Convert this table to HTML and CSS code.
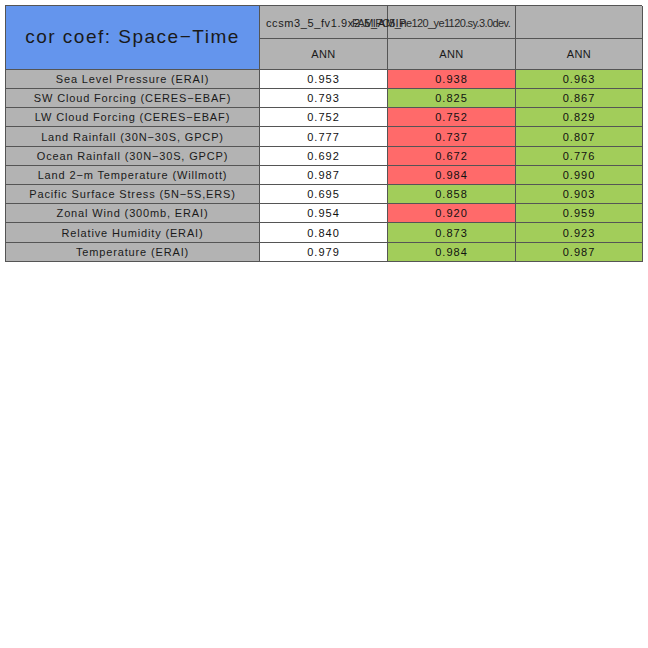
FILE: index.html
```html
<!DOCTYPE html>
<html>
<head>
<meta charset="utf-8">
<link rel="stylesheet" href="styles.css">
</head>
<body>
<div class="table">
  <div class="title">cor coef: Space−Time</div>
  <div class="hcell h1"><span class="case1">ccsm3_5_fv1.9x2.5_AMIP</span></div>
  <div class="hcell h1"><span class="case2">FAMIPC5_ne120_ye1120.sy.3.0dev.</span></div>
  <div class="hcell h1"></div>
  <div class="hcell">ANN</div>
  <div class="hcell">ANN</div>
  <div class="hcell">ANN</div>

  <div class="label">Sea Level Pressure (ERAI)</div><div class="val">0.953</div><div class="val red">0.938</div><div class="val green">0.963</div>
  <div class="label">SW Cloud Forcing (CERES−EBAF)</div><div class="val">0.793</div><div class="val green">0.825</div><div class="val green">0.867</div>
  <div class="label">LW Cloud Forcing (CERES−EBAF)</div><div class="val">0.752</div><div class="val red">0.752</div><div class="val green">0.829</div>
  <div class="label">Land Rainfall (30N−30S, GPCP)</div><div class="val">0.777</div><div class="val red">0.737</div><div class="val green">0.807</div>
  <div class="label">Ocean Rainfall (30N−30S, GPCP)</div><div class="val">0.692</div><div class="val red">0.672</div><div class="val green">0.776</div>
  <div class="label">Land 2−m Temperature (Willmott)</div><div class="val">0.987</div><div class="val red">0.984</div><div class="val green">0.990</div>
  <div class="label">Pacific Surface Stress (5N−5S,ERS)</div><div class="val">0.695</div><div class="val green">0.858</div><div class="val green">0.903</div>
  <div class="label">Zonal Wind (300mb, ERAI)</div><div class="val">0.954</div><div class="val red">0.920</div><div class="val green">0.959</div>
  <div class="label">Relative Humidity (ERAI)</div><div class="val">0.840</div><div class="val green">0.873</div><div class="val green">0.923</div>
  <div class="label">Temperature (ERAI)</div><div class="val">0.979</div><div class="val green">0.984</div><div class="val green">0.987</div>
</div>
</body>
</html>
```
FILE: styles.css
```css
html, body {
  margin: 0;
  padding: 0;
  background: #ffffff;
}
body {
  padding: 5px;
  font-family: "Liberation Sans", Arial, sans-serif;
  color: #111;
}
.table {
  display: grid;
  width: 637px;
  grid-template-columns: 254px 128px 128px 127px;
  grid-template-rows: 33px 31px 19px 19px 19px 20px 19px 19px 19px 19px 20px 19px;
  border-left: 1px solid #555;
  border-top: 1px solid #555;
  box-sizing: border-box;
}
.table > div {
  box-sizing: border-box;
  border-right: 1px solid #555;
  border-bottom: 1px solid #555;
  display: flex;
  align-items: center;
  justify-content: center;
  white-space: nowrap;
}
.title {
  grid-row: 1 / span 2;
  background: #6495ed;
  font-size: 19px;
  letter-spacing: 1.5px;
  color: #1a1a1a;
  padding-bottom: 2px;
}
.hcell {
  background: #b3b3b3;
  font-size: 11px;
  letter-spacing: 0.4px;
  color: #1a1a1a;
}
.h1 {
  position: relative;
}
.case1 {
  position: absolute;
  z-index: 2;
  left: 6px;
  top: 11px;
  letter-spacing: 0.6px;
}
.case2 {
  position: absolute;
  z-index: 2;
  left: -36px;
  top: 11px;
  letter-spacing: -0.6px;
  color: #2a2a2a;
}
.label {
  background: #b3b3b3;
  font-size: 11px;
  letter-spacing: 0.85px;
  color: #1a1a1a;
}
.val {
  background: #ffffff;
  font-size: 11px;
  letter-spacing: 1px;
  color: #111;
}
.red { background: #ff6a6a; }
.green { background: #a2cd5a; }
```
